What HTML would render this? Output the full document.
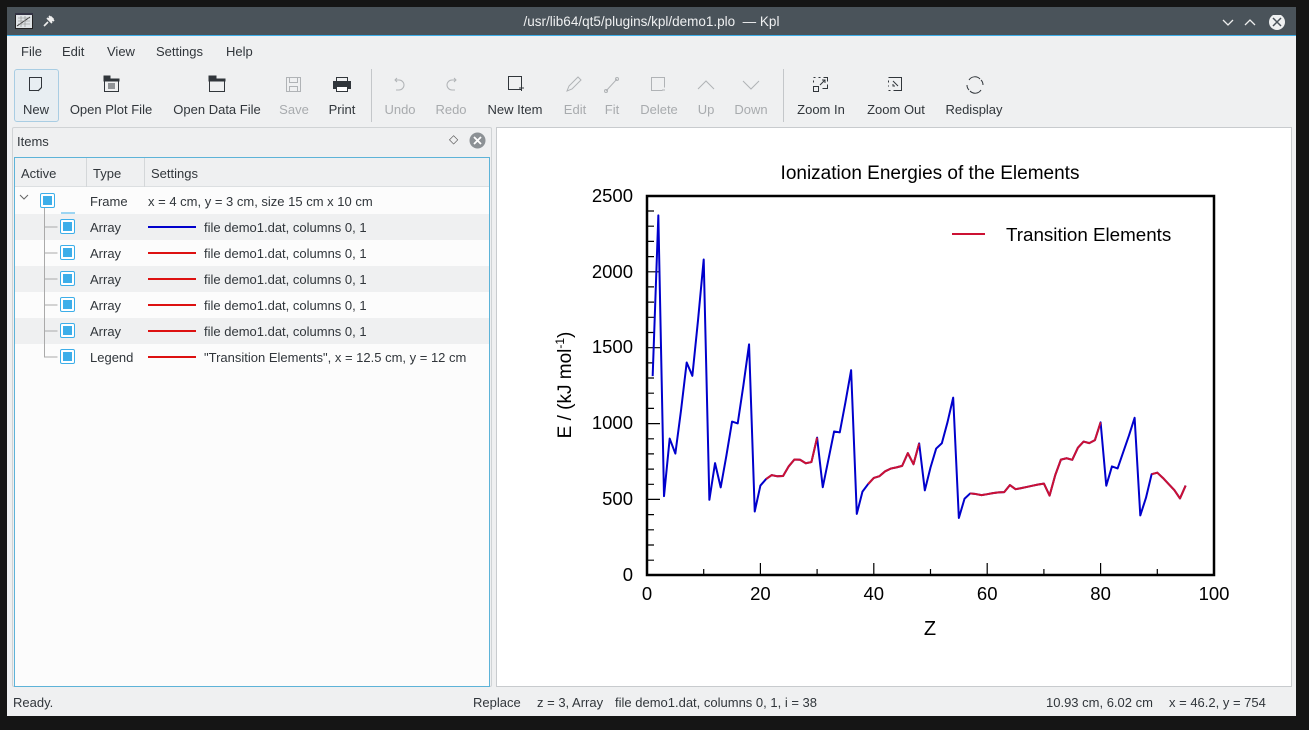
<!DOCTYPE html>
<html><head><meta charset="utf-8"><style>
*{margin:0;padding:0;box-sizing:border-box}
body{width:1309px;height:730px;background:#151515;font-family:"Liberation Sans",sans-serif;font-size:13px;color:#31363b;position:relative;overflow:hidden}
.a{position:absolute;white-space:nowrap}
#win{position:absolute;left:7px;top:7px;width:1289px;height:709px;background:#eff0f1}
#title{position:absolute;left:0;top:0;width:1289px;height:29px;background:#4a535a;border-bottom:1px solid #3daee9;color:#eff0f1;font-size:13.5px}
.tb{position:absolute;top:102px;font-size:13px;color:#31363b;transform:translateX(-50%)}
.dis{color:#a8abae}
.row{position:absolute;left:15px;width:474px;height:26px}
.cb{position:absolute;width:15px;height:15px;border:1px solid #3daee9;background:#fff;border-radius:2px}
.cb:after{content:"";position:absolute;left:2px;top:2px;width:9px;height:9px;background:#3daee9}
.ln{position:absolute;width:48px;height:2px}
.st{position:absolute;top:695px;font-size:13px}
</style></head><body>
<div id="win">
 <div id="title">
  <svg class="a" style="left:8px;top:6px" width="18" height="16"><rect x="0.5" y="0.5" width="17" height="15" fill="#dfe3e6" stroke="#222"/><rect x="0" y="0" width="18" height="2" fill="#334"/><path d="M2 13 L15 4" stroke="#333" fill="none"/><path d="M3 5h12M3 8h12M3 11h12M6 3v11M10 3v11" stroke="#888" stroke-width="0.6"/></svg>
  <svg class="a" style="left:35px;top:7px" width="14" height="14"><path d="M2 12l4-4M5 4l5 5M7 2l5 5M6 5l3-2 2 2-2 3z" stroke="#eee" stroke-width="1.6" fill="#eee"/></svg>
  <div class="a" style="left:0;width:1289px;text-align:center;top:7px">/usr/lib64/qt5/plugins/kpl/demo1.plo &nbsp;— Kpl</div>
  <svg class="a" style="left:1213px;top:8px" width="80" height="16"><path d="M3 5l5 5 5-5" stroke="#eee" fill="none" stroke-width="1.3"/><path d="M25 10l5-5 5 5" stroke="#eee" fill="none" stroke-width="1.3"/><circle cx="57" cy="7" r="8" fill="#eef0f1"/><path d="M53 3l8 8M61 3l-8 8" stroke="#4a535a" stroke-width="1.5"/></svg>
 </div>
</div>
<div class="a" style="left:21px;top:44px">File</div>
<div class="a" style="left:62px;top:44px">Edit</div>
<div class="a" style="left:107px;top:44px">View</div>
<div class="a" style="left:156px;top:44px">Settings</div>
<div class="a" style="left:226px;top:44px">Help</div>
<div class="a" style="left:14px;top:69px;width:45px;height:53px;border:1px solid #a9cde3;border-radius:3px;background:#e8eef2"></div>
<div class="a" style="left:371px;top:69px;width:1px;height:53px;background:#c4c7ca"></div>
<div class="a" style="left:783px;top:69px;width:1px;height:53px;background:#c4c7ca"></div>
<svg class="a" style="left:0;top:0" width="1309" height="130">
 <g fill="none" stroke="#31363b" stroke-width="1">
  <path d="M29.5 77.5h12v10l-3 3h-9z"/><path d="M38 91l3.5-3.5" />
  <rect x="104.5" y="79.5" width="14" height="12"/><rect x="104" y="76" width="6" height="4" fill="#31363b"/><rect x="104" y="79" width="15" height="2" fill="#31363b"/><path d="M108 84h7M108 86h7M108 88h7" stroke-width="1"/>
  <rect x="209.5" y="79.5" width="15" height="12"/><rect x="209" y="76" width="7" height="4" fill="#31363b"/><rect x="209" y="79" width="16" height="2" fill="#31363b"/>
  <g stroke="#b0b3b6"><rect x="286.5" y="77.5" width="14" height="14"/><rect x="289.5" y="77.5" width="8" height="5"/><rect x="289.5" y="86.5" width="8" height="5"/></g>
  <rect x="336.5" y="77.5" width="11" height="4"/><rect x="333.5" y="81.5" width="17" height="7" fill="#31363b"/><rect x="336.5" y="86.5" width="11" height="5" fill="#fff"/>
  <g stroke="#b0b3b6"><path d="M397 78l-2 2 2 2M395 80h4a5 5 0 0 1 0 10h-3"/><path d="M454 78l2 2-2 2M456 80h-4a5 5 0 0 0 0 10h3"/>
  <path d="M567 91l2-5 9-9 3 3-9 9z"/><path d="M606 91l11-12" /><circle cx="606" cy="91" r="1.5"/><circle cx="617" cy="79" r="1.5"/>
  <path d="M662.5 90.5h-11v-13h13v10"/><path d="M662 90h3"/>
  <path d="M698 89l8-8 8 8"/><path d="M743 81l8 8 8-8"/></g>
  <path d="M521.5 89.5h-13v-13h13v9M519 88h5M521.5 85v6"/>
  <path d="M813.5 77.5h2M818.5 77.5h2M823.5 77.5h4v4M813.5 80.5v2M827.5 84.5v2M813.5 86.5h5v5h-5zM822.5 88.5h5v-2"/><path d="M820 85l5-5M822 80h3v3"/>
  <path d="M888.5 77.5h13v13h-8M888.5 80.5v2M888.5 85.5v1M888.5 90.5h2M893 81l5 5M895 86h-2v-2"/>
  <path d="M969 80a7 7 0 0 1 11-1M981 90a7 7 0 0 1-11 1M967 85a7 7 0 0 0 2 5M983 85a7 7 0 0 0-2-5"/>
 </g>
</svg>
<div class="tb" style="left:36px">New</div>
<div class="tb" style="left:111px">Open Plot File</div>
<div class="tb" style="left:217px">Open Data File</div>
<div class="tb dis" style="left:294px">Save</div>
<div class="tb" style="left:342px">Print</div>
<div class="tb dis" style="left:400px">Undo</div>
<div class="tb dis" style="left:451px">Redo</div>
<div class="tb" style="left:515px">New Item</div>
<div class="tb dis" style="left:575px">Edit</div>
<div class="tb dis" style="left:612px">Fit</div>
<div class="tb dis" style="left:659px">Delete</div>
<div class="tb dis" style="left:706px">Up</div>
<div class="tb dis" style="left:751px">Down</div>
<div class="tb" style="left:821px">Zoom In</div>
<div class="tb" style="left:896px">Zoom Out</div>
<div class="tb" style="left:974px">Redisplay</div>
<div class="a" style="left:12px;top:127px;width:480px;height:560px;border:1px solid #d0d3d5;border-radius:2px"></div>
<div class="a" style="left:17px;top:134px">Items</div>
<div class="a" style="left:449px;top:132px;font-size:12px;color:#555">◇</div>
<svg class="a" style="left:469px;top:132px" width="17" height="17"><circle cx="8.5" cy="8.5" r="8" fill="#8c9195"/><path d="M5 5l7 7M12 5l-7 7" stroke="#fff" stroke-width="1.8"/></svg>
<div class="a" style="left:14px;top:157px;width:476px;height:530px;border:1px solid #5db3d8;background:#fcfcfc"></div>
<div class="a" style="left:15px;top:158px;width:474px;height:29px;background:#eff0f1;border-bottom:1px solid #dcdfe1"></div>
<div class="a" style="left:86px;top:158px;width:1px;height:29px;background:#d4d7d9"></div>
<div class="a" style="left:144px;top:158px;width:1px;height:29px;background:#d4d7d9"></div>
<div class="a" style="left:21px;top:166px">Active</div>
<div class="a" style="left:93px;top:166px">Type</div>
<div class="a" style="left:151px;top:166px">Settings</div>
<div class="row" style="top:188px;background:#fcfcfc"></div>
<div class="row" style="top:214px;background:#eff0f1"></div>
<div class="row" style="top:240px;background:#fcfcfc"></div>
<div class="row" style="top:266px;background:#eff0f1"></div>
<div class="row" style="top:292px;background:#fcfcfc"></div>
<div class="row" style="top:318px;background:#eff0f1"></div>
<div class="row" style="top:344px;background:#fcfcfc"></div>
<svg class="a" style="left:15px;top:188px" width="60" height="180"><path d="M5 7l4 4 4-4" stroke="#666" fill="none"/><path d="M29.5 13v145M29.5 39h13M29.5 65h13M29.5 91h13M29.5 117h13M29.5 143h13" stroke="#aaa" fill="none"/><path d="M29.5 157v12h13" stroke="#aaa" fill="none"/><path d="M46 25h14" stroke="#3daee9"/></svg>
<div class="cb" style="left:40px;top:193px"></div>
<div class="a" style="left:90px;top:194px">Frame</div>
<div class="a" style="left:148px;top:194px">x = 4 cm, y = 3 cm, size 15 cm x 10 cm</div>
<div class="cb" style="left:60px;top:219px"></div><div class="a" style="left:90px;top:220px">Array</div><div class="ln" style="left:148px;top:226px;background:#0000cc"></div><div class="a" style="left:204px;top:220px">file demo1.dat, columns 0, 1</div>
<div class="cb" style="left:60px;top:245px"></div><div class="a" style="left:90px;top:246px">Array</div><div class="ln" style="left:148px;top:252px;background:#dd1111"></div><div class="a" style="left:204px;top:246px">file demo1.dat, columns 0, 1</div>
<div class="cb" style="left:60px;top:271px"></div><div class="a" style="left:90px;top:272px">Array</div><div class="ln" style="left:148px;top:278px;background:#dd1111"></div><div class="a" style="left:204px;top:272px">file demo1.dat, columns 0, 1</div>
<div class="cb" style="left:60px;top:297px"></div><div class="a" style="left:90px;top:298px">Array</div><div class="ln" style="left:148px;top:304px;background:#dd1111"></div><div class="a" style="left:204px;top:298px">file demo1.dat, columns 0, 1</div>
<div class="cb" style="left:60px;top:323px"></div><div class="a" style="left:90px;top:324px">Array</div><div class="ln" style="left:148px;top:330px;background:#dd1111"></div><div class="a" style="left:204px;top:324px">file demo1.dat, columns 0, 1</div>
<div class="cb" style="left:60px;top:349px"></div><div class="a" style="left:90px;top:350px">Legend</div><div class="ln" style="left:148px;top:356px;background:#dd1111"></div><div class="a" style="left:204px;top:350px">"Transition Elements", x = 12.5 cm, y = 12 cm</div>
<div class="a" style="left:496px;top:127px;width:796px;height:560px;background:#fff;border:1px solid #c8cbce"></div>
<svg class="a" style="left:0;top:0" width="1309" height="730" font-family="Liberation Sans, sans-serif">
 <text x="930" y="179" font-size="19" text-anchor="middle" fill="#000">Ionization Energies of the Elements</text>
 <g stroke="#000" stroke-width="1.2">
  <path d="M647 560.2h7M647 545h7M647 529.8h7M647 514.6h7M647 484.3h7M647 469.1h7M647 453.9h7M647 438.8h7M647 408.4h7M647 393.2h7M647 378h7M647 362.9h7M647 332.5h7M647 317.3h7M647 302.1h7M647 286.9h7M647 256.6h7M647 241.4h7M647 226.2h7M647 211h7"/>
  <path d="M647 499.4h13M647 423.6h13M647 347.7h13M647 271.8h13"/>
  <path d="M703.7 575v-6M760.4 575v-12M817.1 575v-6M873.8 575v-12M930.5 575v-6M987.2 575v-12M1043.9 575v-6M1100.6 575v-12M1157.3 575v-6"/>
 </g>
 <rect x="647" y="196" width="567" height="379" fill="none" stroke="#000" stroke-width="2.5"/>
 <g font-size="18.5" fill="#000" text-anchor="end">
  <text x="633" y="581">0</text><text x="633" y="505">500</text><text x="633" y="429">1000</text><text x="633" y="353">1500</text><text x="633" y="278">2000</text><text x="633" y="202">2500</text>
 </g>
 <g font-size="18.5" fill="#000" text-anchor="middle">
  <text x="647" y="600">0</text><text x="760.4" y="600">20</text><text x="873.8" y="600">40</text><text x="987.2" y="600">60</text><text x="1100.6" y="600">80</text><text x="1214" y="600">100</text>
  <text x="930" y="635" font-size="20">Z</text>
  <text transform="translate(571,385) rotate(-90)" font-size="19">E / (kJ mol<tspan dy="-7" font-size="12">-1</tspan><tspan dy="7">)</tspan></text>
 </g>
 <path d="M952 234h33" stroke="#cc1133" stroke-width="2"/>
 <text x="1006" y="241" font-size="18.8" fill="#000">Transition Elements</text>
 <g transform="translate(647,575) scale(5.67,-0.1516)" fill="none" stroke-width="2" stroke-linejoin="round">
  <polyline vector-effect="non-scaling-stroke" stroke="#0000cc" points="1,1312 2,2372 3,520 4,900 5,801 6,1086 7,1402 8,1314 9,1681 10,2081 11,496 12,738 13,578 14,787 15,1012 16,1000 17,1251 18,1521 19,419 20,590 21,633 22,659 23,651 24,653 25,717 26,762 27,760 28,737 29,745 30,906 31,579 32,762 33,947 34,941 35,1140 36,1351 37,403 38,550 39,600 40,640 41,652 42,684 43,702 44,710 45,720 46,804 47,731 48,868 49,558 50,709 51,834 52,869 53,1008 54,1170 55,376 56,503 57,538 58,534 59,527 60,533 61,540 62,545 63,547 64,593 65,566 66,573 67,581 68,589 69,597 70,603 71,524 72,659 73,761 74,770 75,760 76,840 77,880 78,870 79,890 80,1007 81,589 82,716 83,703 84,812 85,920 86,1037 87,393 88,509 89,665 90,675 91,640 92,600 93,560 94,505 95,590"/>
  <g stroke="#cc1133">
  <polyline vector-effect="non-scaling-stroke" points="21,633 22,659 23,651 24,653 25,717 26,762 27,760 28,737 29,745 30,906"/>
  <polyline vector-effect="non-scaling-stroke" points="39,600 40,640 41,652 42,684 43,702 44,710 45,720 46,804 47,731 48,868"/>
  <polyline vector-effect="non-scaling-stroke" points="57,538 58,534 59,527 60,533 61,540 62,545 63,547 64,593 65,566 66,573 67,581 68,589 69,597 70,603 71,524 72,659 73,761 74,770 75,760 76,840 77,880 78,870 79,890 80,1007"/>
  <polyline vector-effect="non-scaling-stroke" points="89,665 90,675 91,640 92,600 93,560 94,505 95,590"/>
  </g>
 </g>
</svg>
<div class="st" style="left:13px">Ready.</div>
<div class="st" style="left:473px">Replace</div>
<div class="st" style="left:537px">z = 3, Array</div>
<div class="st" style="left:615px">file demo1.dat, columns 0, 1, i = 38</div>
<div class="st" style="left:1046px">10.93 cm, 6.02 cm</div>
<div class="st" style="left:1169px">x = 46.2, y = 754</div>
</body></html>
